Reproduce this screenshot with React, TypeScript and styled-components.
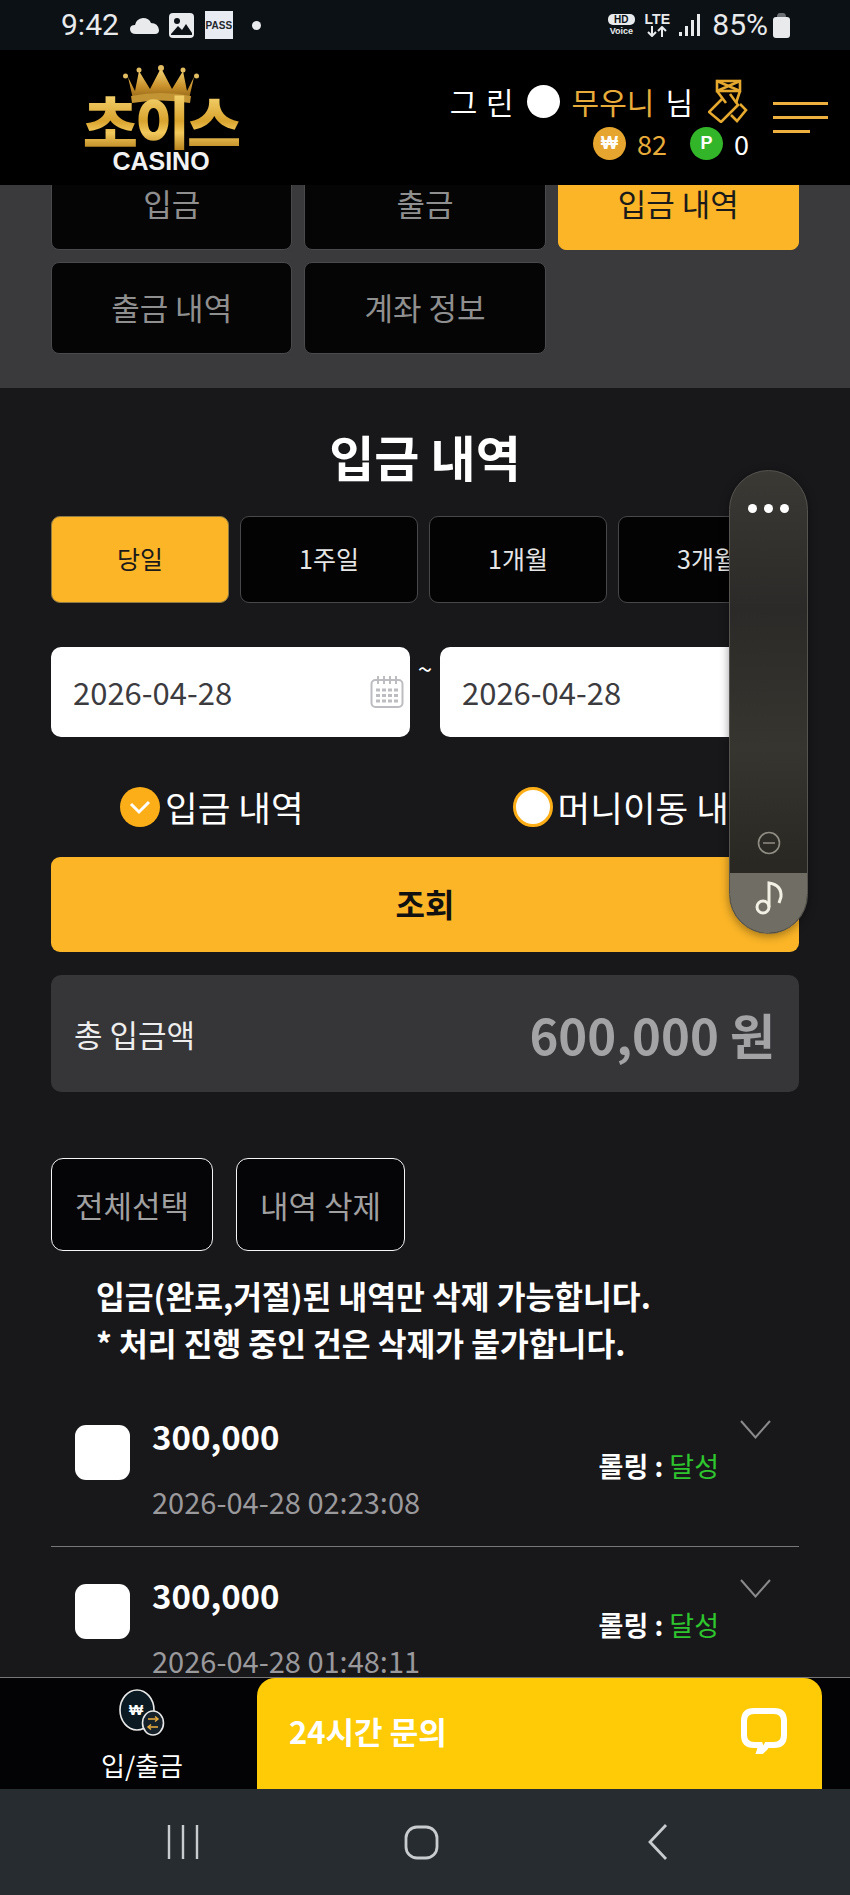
import styled, { createGlobalStyle } from 'styled-components';

const GlobalStyle = createGlobalStyle`
	html, body {
		margin: 0;
		padding: 0;
		background: #18171a;
	}
	* {
		box-sizing: border-box;
	}
	body {
		font-family: 'Noto Sans CJK KR', 'Noto Sans', sans-serif;
	}
`;

const Page = styled.div`
	position: relative;
	width: 850px;
	height: 1895px;
	overflow: hidden;
	display: flex;
	flex-direction: column;
	background: #18171a;
	color: #fff;
`;

/* Status bar */
const StatusBar = styled.div`
	flex: 0 0 50px;
	display: flex;
	align-items: center;
	justify-content: space-between;
	padding: 0 60px 0 61px;
	background: #0c1116;
	color: #e8eaec;
`;

const StatusGroup = styled.div`
	display: flex;
	align-items: center;
`;

const StatusTime = styled.span`
	font-family: Roboto, sans-serif;
	font-size: 30px;
	line-height: 1;
	margin-right: 11px;
`;

const PassBadge = styled.span`
	display: flex;
	align-items: center;
	justify-content: center;
	width: 28px;
	height: 28px;
	margin: 0 19px 0 11px;
	background: #e8ebf2;
	color: #23262b;
	font-family: 'Liberation Sans', sans-serif;
	font-size: 10px;
	font-weight: 700;
`;

const StatusDot = styled.span`
	width: 9px;
	height: 9px;
	border-radius: 50%;
	background: #e8eaec;
`;

const HdVoice = styled.div`
	display: flex;
	flex-direction: column;
	align-items: center;
	width: 28px;
	margin-right: 9px;
	font-family: 'Liberation Sans', sans-serif;
	font-weight: 700;
	line-height: 1;
`;

const HdPill = styled.span`
	width: 27px;
	height: 11px;
	border-radius: 5px;
	background: #e8eaec;
	color: #0c1116;
	font-size: 10px;
	line-height: 11px;
	text-align: center;
`;

const VoiceText = styled.span`
	margin-top: 2px;
	font-size: 9px;
`;

const Lte = styled.div`
	display: flex;
	flex-direction: column;
	align-items: center;
	width: 26px;
	margin-right: 9px;
	font-family: 'Liberation Sans', sans-serif;
	font-size: 14px;
	font-weight: 700;
	line-height: 13px;
`;

const BatteryText = styled.span`
	font-family: Roboto, sans-serif;
	font-size: 30px;
	line-height: 1;
	margin: 0 5px 0 11px;
`;

/* Site header */
const Header = styled.header`
	flex: 0 0 135px;
	display: flex;
	justify-content: space-between;
	background: #000;
`;

const Logo = styled.div`
	display: flex;
	flex-direction: column;
	align-items: center;
	width: 160px;
	margin: 15px 0 0 81px;
`;

const LogoWord = styled.div`
	margin-top: -13px;
	font-size: 60px;
	font-weight: 900;
	line-height: 58px;
	letter-spacing: -3px;
	white-space: nowrap;
	background: linear-gradient(180deg, #f7d774 0%, #d9a32e 50%, #f3c95c 70%, #b98520 100%);
	-webkit-background-clip: text;
	background-clip: text;
	color: transparent;
`;

const LogoCasino = styled.div`
	margin-top: -1px;
	font-family: 'Liberation Sans', sans-serif;
	font-size: 25px;
	font-weight: 700;
	line-height: 24px;
	color: #f2f2f2;
`;

const HeaderRight = styled.div`
	display: flex;
	padding: 28px 22px 0 0;
`;

const UserBlock = styled.div`
	display: flex;
	flex-direction: column;
	align-items: flex-end;
	margin-right: 25px;
`;

const UserLine = styled.div`
	display: flex;
	align-items: center;
	height: 46px;
	font-size: 30px;
	line-height: 46px;
`;

const UserLabel = styled.span`
	letter-spacing: 1px;
	margin-right: 12px;
`;

const UserLevel = styled.span`
	width: 33px;
	height: 33px;
	border-radius: 50%;
	background: #fff;
	margin-right: 12px;
`;

const UserName = styled.span`
	color: #e8ac3a;
	margin-right: 11px;
`;

const UserSuffix = styled.span`
	margin-right: 15px;
`;

const WalletLine = styled.div`
	display: flex;
	align-items: center;
	margin: 3px -1px 0 0;
	height: 33px;
	font-size: 27px;
	line-height: 33px;
`;

const CoinBadge = styled.span<{ $bg: string }>`
	display: flex;
	align-items: center;
	justify-content: center;
	width: 33px;
	height: 33px;
	border-radius: 50%;
	background: ${(props) => props.$bg};
	color: #fff;
	font-family: 'Liberation Sans', sans-serif;
	font-size: 18px;
	font-weight: 700;
`;

const CoinValue = styled.span<{ $color: string; $gap: number }>`
	color: ${(props) => props.$color};
	margin: 0 ${(props) => props.$gap}px 0 11px;
`;

const Burger = styled.div`
	display: flex;
	flex-direction: column;
	gap: 11px;
	width: 55px;
	padding-top: 24px;
`;

const BurgerLine = styled.span<{ $short?: boolean }>`
	display: block;
	height: 3px;
	width: ${(props) => (props.$short ? '37px' : '100%')};
	background: #eeb03e;
`;

/* Scrolled content */
const Content = styled.main`
	flex: 1;
	min-height: 0;
	overflow: hidden;
`;

const TabsPanel = styled.section`
	display: flow-root;
	height: 203px;
	padding: 0 51px;
	background: #3a393c;
`;

const TabsGrid = styled.div`
	display: grid;
	grid-template-columns: repeat(3, 1fr);
	grid-auto-rows: 92px;
	gap: 12px;
	margin-top: -27px;
`;

const Tab = styled.div<{ $active?: boolean }>`
	display: flex;
	align-items: center;
	justify-content: center;
	padding-bottom: 3px;
	border-radius: 8px;
	border: 1px solid ${(props) => (props.$active ? '#fbb527' : '#4a494c')};
	background: ${(props) => (props.$active ? '#fbb527' : '#050505')};
	color: ${(props) => (props.$active ? '#1a1a1a' : '#8f8f8f')};
	font-size: 31px;
`;

const Body = styled.section`
	padding: 0 51px;
`;

const Title = styled.h2`
	margin: 0;
	padding-top: 36px;
	height: 128px;
	font-size: 49px;
	font-weight: 700;
	line-height: 64px;
	text-align: center;
`;

const PeriodRow = styled.div`
	display: flex;
	gap: 11px;
`;

const PeriodButton = styled.div<{ $active?: boolean }>`
	display: flex;
	align-items: center;
	justify-content: center;
	flex: 0 0 178px;
	height: 87px;
	padding-bottom: 3px;
	border-radius: 9px;
	border: 1px solid ${(props) => (props.$active ? '#8e7a45' : '#48474a')};
	background: ${(props) => (props.$active ? '#fbb527' : '#030303')};
	color: ${(props) => (props.$active ? '#1a1a1a' : '#e6e6e6')};
	font-size: 25px;
`;

const DateRow = styled.div`
	display: flex;
	margin-top: 44px;
`;

const DateInput = styled.div`
	flex: 0 0 359px;
	display: flex;
	align-items: center;
	justify-content: space-between;
	height: 90px;
	padding: 0 6px 0 22px;
	border-radius: 10px;
	background: #fff;
	color: #3c3c40;
	font-size: 31px;
`;

const DateValue = styled.span`
	margin-top: -2px;
`;

const Tilde = styled.span`
	flex: 0 0 30px;
	padding-top: 6px;
	text-align: center;
	font-size: 26px;
	line-height: 30px;
`;

const RadioRow = styled.div`
	display: flex;
	align-items: center;
	gap: 209px;
	height: 120px;
	padding: 20px 0 0 69px;
	white-space: nowrap;
`;

const RadioItem = styled.label`
	display: flex;
	align-items: center;
	gap: 5px;
	font-size: 35.5px;
	line-height: 42px;
`;

const RadioMark = styled.span<{ $checked?: boolean }>`
	display: flex;
	align-items: center;
	justify-content: center;
	flex: 0 0 40px;
	height: 40px;
	border-radius: 50%;
	background: ${(props) => (props.$checked ? '#fbae17' : '#fff')};
	border: ${(props) => (props.$checked ? 'none' : '3px solid #fbae17')};
`;

const SearchButton = styled.div`
	display: flex;
	align-items: center;
	justify-content: center;
	height: 95px;
	padding-bottom: 3px;
	border-radius: 9px;
	background: #fbb527;
	color: #111;
	font-size: 32px;
	font-weight: 700;
`;

const TotalBox = styled.div`
	display: flex;
	align-items: center;
	justify-content: space-between;
	height: 117px;
	margin-top: 23px;
	padding: 0 24px 0 23px;
	border-radius: 10px;
	background: #363538;
`;

const TotalLabel = styled.span`
	font-size: 31px;
	color: #eee;
`;

const TotalValue = styled.span`
	font-size: 49px;
	font-weight: 700;
	color: #a3a2a5;
`;

const ActionRow = styled.div`
	display: flex;
	gap: 23px;
	margin-top: 66px;
`;

const ActionButton = styled.div`
	display: flex;
	align-items: center;
	justify-content: center;
	height: 93px;
	padding: 0 23px;
	border-radius: 12px;
	border: 1px solid #f5f5f5;
	background: #050407;
	color: #a0a0a0;
	font-size: 31px;
`;

const Notes = styled.div`
	height: 137px;
	padding: 21px 0 0 45px;
	font-size: 31.3px;
	font-weight: 700;
	line-height: 47px;
`;

const Row = styled.div`
	display: flex;
	align-items: flex-start;
	height: 159px;
	padding: 0 28px 0 24px;
	border-bottom: 1px solid #77767a;
`;

const RowCheck = styled.span`
	flex: 0 0 55px;
	height: 55px;
	margin: 37px 22px 0 0;
	border-radius: 11px;
	background: #fff;
`;

const RowInfo = styled.div`
	flex: 1;
	padding-top: 26px;
`;

const RowAmount = styled.div`
	font-size: 33px;
	font-weight: 700;
	line-height: 44px;
`;

const RowDate = styled.div`
	margin-top: 21px;
	font-size: 29px;
	line-height: 44px;
	color: #9a999c;
`;

const RowRolling = styled.div`
	margin: 61px 21px 0 0;
	font-size: 27px;
	font-weight: 700;
	line-height: 34px;
`;

const RollingState = styled.span`
	color: #2ec52e;
	font-weight: 400;
`;

const RowChevron = styled.div`
	margin-top: 32px;
	line-height: 0;
`;

/* Bottom menu */
const BottomMenu = styled.nav`
	flex: 0 0 112px;
	display: flex;
	border-top: 1px solid #77767a;
	background: #030305;
`;

const MenuItem = styled.div`
	flex: 0 0 257px;
	display: flex;
	flex-direction: column;
	align-items: center;
	padding: 11px 0 0 27px;
	font-size: 26px;
	line-height: 34px;
`;

const MenuIcon = styled.div`
	height: 50px;
	margin-bottom: 9px;
`;

const ChatButton = styled.div`
	flex: 0 0 565px;
	display: flex;
	align-items: center;
	justify-content: space-between;
	padding: 0 35px 6px 32px;
	border-radius: 18px 18px 0 0;
	background: #fecb06;
	font-size: 31px;
	font-weight: 700;
`;

/* Android navigation */
const NavBar = styled.div`
	flex: 0 0 106px;
	display: flex;
	align-items: center;
	background: #262c30;
	padding: 0 0 0 167px;
	gap: 205px;
`;

/* Samsung edge panel over the page */
const EdgePanel = styled.aside`
	position: absolute;
	top: 470px;
	left: 729px;
	width: 79px;
	height: 464px;
	display: flex;
	flex-direction: column;
	align-items: center;
	border-radius: 40px;
	border: 1px solid #55544f;
	overflow: hidden;
	background: linear-gradient(180deg, #3a3934 0%, #2b2a28 30%, #36352f 60%, #2a2823 85%);
	box-shadow: 0 2px 10px rgba(0, 0, 0, 0.4);
`;

const EdgeDots = styled.div`
	display: flex;
	gap: 7px;
	margin-top: 33px;
`;

const EdgeDot = styled.span`
	width: 9px;
	height: 9px;
	border-radius: 50%;
	background: #fff;
`;

const EdgeMinus = styled.div`
	margin-top: auto;
	margin-bottom: 18px;
	line-height: 0;
`;

const EdgeMusic = styled.div`
	flex: 0 0 60px;
	align-self: stretch;
	display: flex;
	justify-content: center;
	padding-top: 7px;
	background: #706e64;
`;

const topTabs = [
	{ label: '입금' },
	{ label: '출금' },
	{ label: '입금 내역', active: true },
	{ label: '출금 내역' },
	{ label: '계좌 정보' },
];

const periods = ['당일', '1주일', '1개월', '3개월'];

const rows = [
	{ amount: '300,000', date: '2026-04-28 02:23:08' },
	{ amount: '300,000', date: '2026-04-28 01:48:11' },
];

const Crown = () => (
	<svg width="76" height="40" viewBox="0 0 76 40">
		<defs>
			<linearGradient id="crownGold" x1="0" y1="0" x2="0" y2="1">
				<stop offset="0" stopColor="#f6d776" />
				<stop offset="0.6" stopColor="#c8902a" />
				<stop offset="1" stopColor="#8f6418" />
			</linearGradient>
		</defs>
		<path d="M5 12 L12 26 L16 6 L27 24 L38 3 L49 24 L60 6 L64 26 L71 12 L66 34 L10 34 Z" fill="url(#crownGold)" />
		<path d="M8 31 Q38 25 68 31 L67 38 Q38 33 9 38 Z" fill="#c39434" />
		<circle cx="2.5" cy="11" r="2.5" fill="#e3bd62" />
		<circle cx="16" cy="5" r="2.5" fill="#e3bd62" />
		<circle cx="38" cy="3" r="3" fill="#e3bd62" />
		<circle cx="60" cy="5" r="2.5" fill="#e3bd62" />
		<circle cx="73.5" cy="11" r="2.5" fill="#e3bd62" />
	</svg>
);

const RankIcon = () => (
	<svg width="40" height="44" viewBox="0 0 40 44" fill="none" stroke="#e6a92f" strokeWidth="2.6">
		<rect x="9" y="2" width="23" height="10" />
		<path d="M9 2 L32 12 M32 2 L9 12" />
		<path d="M9 12 L18 24 M32 12 L28 24" />
		<path d="M14 20 L1 33 L13 43 L30 26 L22 15" />
		<path d="M23 36 L29 42 L38 31 L32 25" />
	</svg>
);

const CalendarIcon = () => (
	<svg width="34" height="34" viewBox="0 0 34 34" fill="none" stroke="#bdbcc0" strokeWidth="2">
		<rect x="1.5" y="5" width="31" height="27" rx="4" />
		<path d="M8 1 V9 M14 1 V9 M20 1 V9 M26 1 V9" />
		<path d="M6 15 H28 M6 20.5 H28 M6 26 H28" strokeWidth="3" strokeDasharray="4 2" />
	</svg>
);

const Chevron = () => (
	<svg width="31" height="19" viewBox="0 0 31 19" fill="none" stroke="#8a898c" strokeWidth="2">
		<path d="M1 1 L15.5 17.5 L30 1" />
	</svg>
);

const WalletIcon = () => (
	<svg width="46" height="48" viewBox="0 0 46 48" fill="none">
		<ellipse cx="18" cy="21" rx="17" ry="20" stroke="#e8e8e8" strokeWidth="1.6" fill="#0b1a22" />
		<ellipse cx="34" cy="34" rx="10.5" ry="12" stroke="#e8e8e8" strokeWidth="1.6" fill="#16212a" />
		<path d="M29 30 H39 M29 38 H39" stroke="#eeb03e" strokeWidth="1.6" />
		<path d="M36 27.5 L39 30 L36 32.5 M32 35.5 L29 38 L32 40.5" stroke="#eeb03e" strokeWidth="1.4" />
		<text x="17" y="26" textAnchor="middle" fontSize="15" fontWeight="700" fill="#fff" fontFamily="Liberation Sans, sans-serif">₩</text>
	</svg>
);

const ChatIcon = () => (
	<svg width="46" height="46" viewBox="0 0 46 46" fill="none">
		<path
			d="M13 3 H33 Q43 3 43 13 V27 Q43 37 33 37 H26 Q24 41 18 45 Q20 40 19 37 H13 Q3 37 3 27 V13 Q3 3 13 3 Z"
			stroke="#fff"
			strokeWidth="6"
			fill="none"
		/>
	</svg>
);

const App = () => {
	return (
		<Page>
			<GlobalStyle />

			<StatusBar>
				<StatusGroup>
					<StatusTime>9:42</StatusTime>
					<svg width="29" height="17" viewBox="0 0 29 17" fill="#e8eaec">
						<path d="M6 17 Q0 17 0 12 Q0 8 5 8 Q6 2 13 1 Q19 1 21 6 Q28 6 29 13 Q29 17 25 17 Z" />
					</svg>
					<svg width="25" height="25" viewBox="0 0 25 25" fill="none" style={{ marginLeft: 10 }}>
						<rect x="0" y="0" width="25" height="25" rx="4" fill="#e8eaec" />
						<circle cx="8" cy="8" r="3" fill="#0c1116" />
						<path d="M2 21 L9 13 L13 17 L17 11 L23 20 V22 H2 Z" fill="#0c1116" />
					</svg>
					<PassBadge>PASS</PassBadge>
					<StatusDot />
				</StatusGroup>
				<StatusGroup>
					<HdVoice>
						<HdPill>HD</HdPill>
						<VoiceText>Voice</VoiceText>
					</HdVoice>
					<Lte>
						LTE
						<svg width="20" height="11" viewBox="0 0 20 11" fill="none" stroke="#e8eaec" strokeWidth="2">
							<path d="M5 0 V10 M1 6 L5 10 L9 6" />
							<path d="M15 11 V1 M11 5 L15 1 L19 5" />
						</svg>
					</Lte>
					<svg width="22" height="24" viewBox="0 0 22 24" fill="#e8eaec">
						<rect x="0" y="19" width="3" height="4" />
						<rect x="6" y="13" width="3" height="10" />
						<rect x="12" y="7" width="3" height="16" />
						<rect x="18" y="1" width="3" height="22" />
					</svg>
					<BatteryText>85%</BatteryText>
					<svg width="17" height="25" viewBox="0 0 17 25">
						<path d="M4 4 Q4 0 7 0 H10 Q13 0 13 4 Z" fill="#6d7175" />
						<rect x="0" y="4" width="17" height="21" rx="3" fill="#e8eaec" />
					</svg>
				</StatusGroup>
			</StatusBar>

			<Header>
				<Logo>
					<Crown />
					<LogoWord>초이스</LogoWord>
					<LogoCasino>CASINO</LogoCasino>
				</Logo>
				<HeaderRight>
					<UserBlock>
						<UserLine>
							<UserLabel>그 린</UserLabel>
							<UserLevel />
							<UserName>무우니</UserName>
							<UserSuffix>님</UserSuffix>
							<RankIcon />
						</UserLine>
						<WalletLine>
							<CoinBadge $bg="#e5a52e">₩</CoinBadge>
							<CoinValue $color="#e8ac3a" $gap={23}>82</CoinValue>
							<CoinBadge $bg="#33b52a">P</CoinBadge>
							<CoinValue $color="#fff" $gap={0}>0</CoinValue>
						</WalletLine>
					</UserBlock>
					<Burger>
						<BurgerLine />
						<BurgerLine />
						<BurgerLine $short />
					</Burger>
				</HeaderRight>
			</Header>

			<Content>
				<TabsPanel>
					<TabsGrid>
						{topTabs.map((tab) => (
							<Tab key={tab.label} $active={tab.active}>
								{tab.label}
							</Tab>
						))}
					</TabsGrid>
				</TabsPanel>

				<Body>
					<Title>입금 내역</Title>

					<PeriodRow>
						{periods.map((period, index) => (
							<PeriodButton key={period} $active={index === 0}>
								{period}
							</PeriodButton>
						))}
					</PeriodRow>

					<DateRow>
						<DateInput>
							<DateValue>2026-04-28</DateValue>
							<CalendarIcon />
						</DateInput>
						<Tilde>~</Tilde>
						<DateInput>
							<DateValue>2026-04-28</DateValue>
							<CalendarIcon />
						</DateInput>
					</DateRow>

					<RadioRow>
						<RadioItem>
							<RadioMark $checked>
								<svg width="22" height="16" viewBox="0 0 22 16" fill="none" stroke="#fff" strokeWidth="3">
									<path d="M2 5 L10 13 L20 3" />
								</svg>
							</RadioMark>
							입금 내역
						</RadioItem>
						<RadioItem>
							<RadioMark />
							머니이동 내역
						</RadioItem>
					</RadioRow>

					<SearchButton>조회</SearchButton>

					<TotalBox>
						<TotalLabel>총 입금액</TotalLabel>
						<TotalValue>600,000 원</TotalValue>
					</TotalBox>

					<ActionRow>
						<ActionButton>전체선택</ActionButton>
						<ActionButton>내역 삭제</ActionButton>
					</ActionRow>

					<Notes>
						입금(완료,거절)된 내역만 삭제 가능합니다.
						<br />* 처리 진행 중인 건은 삭제가 불가합니다.
					</Notes>

					{rows.map((row) => (
						<Row key={row.date}>
							<RowCheck />
							<RowInfo>
								<RowAmount>{row.amount}</RowAmount>
								<RowDate>{row.date}</RowDate>
							</RowInfo>
							<RowRolling>
								롤링 : <RollingState>달성</RollingState>
							</RowRolling>
							<RowChevron>
								<Chevron />
							</RowChevron>
						</Row>
					))}
				</Body>
			</Content>

			<BottomMenu>
				<MenuItem>
					<MenuIcon>
						<WalletIcon />
					</MenuIcon>
					입/출금
				</MenuItem>
				<ChatButton>
					24시간 문의
					<ChatIcon />
				</ChatButton>
			</BottomMenu>

			<NavBar>
				<svg width="32" height="34" viewBox="0 0 32 34" stroke="#c8ccce" strokeWidth="2.4">
					<path d="M2 0 V34 M16 0 V34 M30 0 V34" />
				</svg>
				<svg width="35" height="35" viewBox="0 0 35 35" fill="none" stroke="#c8ccce" strokeWidth="2.8">
					<rect x="2" y="2" width="31" height="31" rx="11" />
				</svg>
				<svg width="20" height="36" viewBox="0 0 20 36" fill="none" stroke="#c8ccce" strokeWidth="2.8" style={{ marginLeft: 4 }}>
					<path d="M18 1 L2 18 L18 35" />
				</svg>
			</NavBar>

			<EdgePanel>
				<EdgeDots>
					<EdgeDot />
					<EdgeDot />
					<EdgeDot />
				</EdgeDots>
				<EdgeMinus>
					<svg width="24" height="24" viewBox="0 0 24 24" fill="none" stroke="#8f8d84" strokeWidth="1.6">
						<circle cx="12" cy="12" r="10.5" />
						<path d="M6 12 H18" />
					</svg>
				</EdgeMinus>
				<EdgeMusic>
					<svg width="30" height="36" viewBox="0 0 30 36" fill="none" stroke="#f2efe4" strokeWidth="3">
						<circle cx="9" cy="27" r="6" />
						<path d="M15 27 V3 Q28 5 27 17 L25 23" />
					</svg>
				</EdgeMusic>
			</EdgePanel>
		</Page>
	);
};

export default App;
